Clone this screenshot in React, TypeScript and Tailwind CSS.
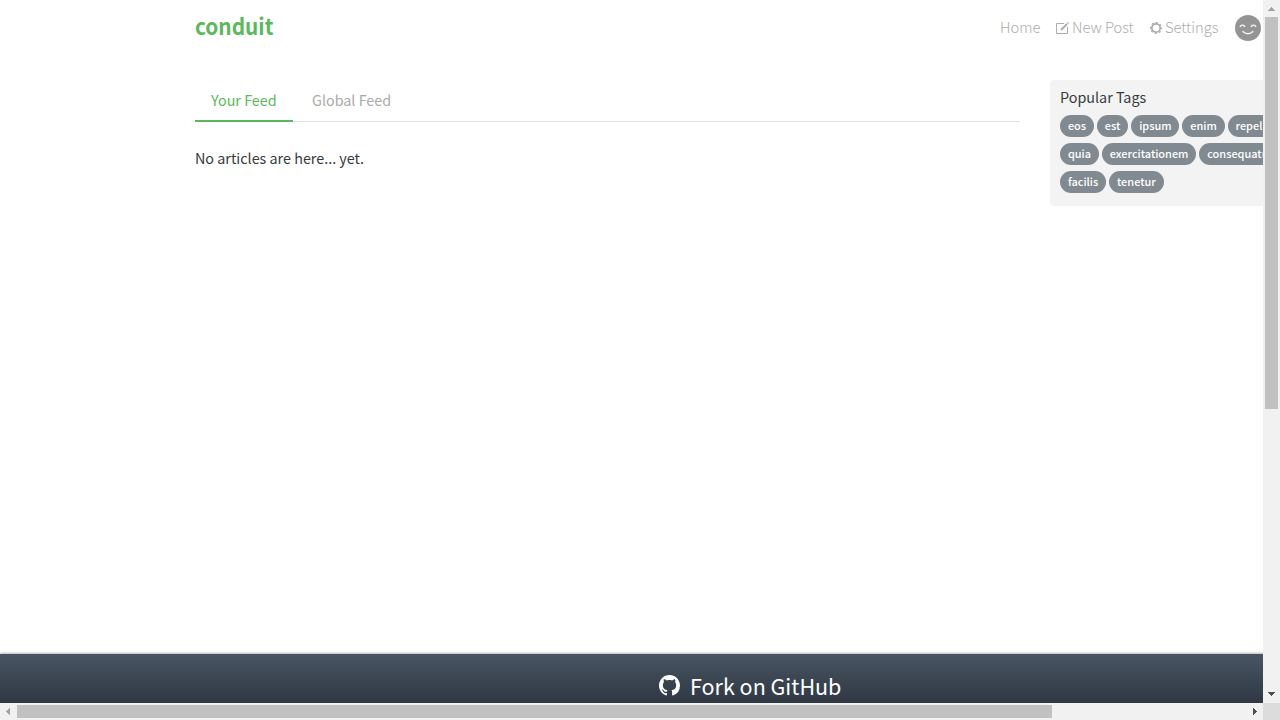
import type { ReactNode } from 'react';

function ComposeIcon() {
  return (
    <svg className="mr-[3px] h-[13px] w-[13px] shrink-0" viewBox="0 0 13 13" fill="none" stroke="currentColor">
      <path d="M8.2 1.5H.5v10h11V5" strokeWidth="1" />
      <path d="M5 8 11 2" strokeWidth="2" />
      <path d="M11.5 1.5 12.4.6" strokeWidth="1.6" />
    </svg>
  );
}

function GearIcon() {
  return (
    <svg className="mr-[3px] h-[13px] w-[13px] shrink-0" viewBox="0 0 13 13" fill="none" stroke="currentColor">
      <circle cx="7" cy="6" r="4.2" strokeWidth="1.7" />
      <circle cx="7" cy="6" r="5.4" strokeWidth="1.3" strokeDasharray="2.12 2.12" strokeDashoffset="1.06" />
    </svg>
  );
}

function GithubIcon() {
  return (
    <svg className="mt-[7px] mr-[10px] h-[21px] w-[21px] shrink-0" viewBox="0 0 16 16" fill="currentColor">
      <path d="M8 0C3.58 0 0 3.58 0 8c0 3.54 2.29 6.53 5.47 7.59.4.07.55-.17.55-.38 0-.19-.01-.82-.01-1.49-2.01.37-2.53-.49-2.69-.94-.09-.23-.48-.94-.82-1.13-.28-.15-.68-.52-.01-.53.63-.01 1.08.58 1.23.82.72 1.21 1.87.87 2.33.66.07-.52.28-.87.51-1.07-1.78-.2-3.64-.89-3.64-3.95 0-.87.31-1.59.82-2.15-.08-.2-.36-1.02.08-2.12 0 0 .67-.21 2.2.82.64-.18 1.32-.27 2-.27s1.36.09 2 .27c1.53-1.04 2.2-.82 2.2-.82.44 1.1.16 1.92.08 2.12.51.56.82 1.27.82 2.15 0 3.07-1.87 3.75-3.65 3.95.29.25.54.73.54 1.48 0 1.07-.01 1.93-.01 2.2 0 .21.15.46.55.38A8.01 8.01 0 0 0 16 8c0-4.42-3.58-8-8-8Z" />
    </svg>
  );
}

function Avatar() {
  return (
    <svg className="h-[26px] w-[26px] shrink-0" viewBox="0 0 26 26" fill="none">
      <circle cx="13" cy="13" r="13" fill="#949494" />
      <g stroke="#eeeeee" strokeWidth="1.5" strokeLinecap="round">
        <path d="M5.2 11.4c1-1.5 3.5-1.5 4.5 0M16.2 11.4c1-1.5 3.5-1.5 4.5 0" />
        <path d="M7.9 16.5c2.4 2.9 7.7 2.9 10 0" />
      </g>
    </svg>
  );
}

function Tag({ children }: { children: ReactNode }) {
  return (
    <span className="flex h-[22px] shrink-0 items-center rounded-full bg-[#818a91] px-[7.9px] pb-[2px] text-[10.95px] font-medium text-white">
      {children}
    </span>
  );
}

function Arrow({ d, color }: { d: string; color: string }) {
  return (
    <svg className="h-[17px] w-[17px] shrink-0" viewBox="0 0 17 17" shapeRendering="crispEdges">
      <path d={d} fill={color} />
    </svg>
  );
}

const tagRows = [
  ['eos', 'est', 'ipsum', 'enim', 'repellat'],
  ['quia', 'exercitationem', 'consequatur'],
  ['facilis', 'tenetur'],
];

export default function App() {
  return (
    <div className="grid h-[720px] w-[1280px] grid-cols-[1263px_17px] grid-rows-[703px_17px] overflow-hidden bg-white font-['Noto_Sans_CJK_JP','Noto_Sans_CJK_SC',sans-serif] text-[14.35px] leading-6 text-[#373a3c]">
      <div className="overflow-hidden">
        <div className="flex h-[703px] w-[1500px] flex-col">
          <nav className="flex h-14 shrink-0 items-center pl-[195px] text-[14.7px] font-light text-[#adadad]">
            <a className="w-[805px] origin-left scale-x-[0.945] pb-[6px] text-[22px] font-bold text-[#5cb85c]">conduit</a>
            <a className="w-14 pb-[2px]">Home</a>
            <a className="flex w-[93px] items-center"><ComposeIcon /><span className="pb-[2px]">New Post</span></a>
            <a className="flex w-[86px] items-center"><GearIcon /><span className="pb-[2px]">Settings</span></a>
            <Avatar />
          </nav>
          <main className="flex grow pt-6 pl-[195px]">
            <section className="w-[825px]">
              <div className="flex h-[42px] border-b border-[#e1e1e1]">
                <a className="h-[42px] w-[98px] border-b-2 border-[#5cb85c] pt-[8px] pl-4 text-[#5cb85c]">Your Feed</a>
                <a className="pt-[8px] pl-[19px] text-[#aaa]">Global Feed</a>
              </div>
              <p className="pt-[24px]">No articles are here... yet.</p>
            </section>
            <aside className="ml-[30px] h-[126px] w-[255px] rounded bg-[#f3f3f3] pt-[5px] pl-[10px]">
              <p>Popular Tags</p>
              <div className="flex flex-col gap-[6px] pt-[6px]">
                {tagRows.map((row) => (
                  <div key={row[0]} className="flex gap-[3px]">
                    {row.map((tag) => <Tag key={tag}>{tag}</Tag>)}
                  </div>
                ))}
              </div>
            </aside>
          </main>
          <footer className="flex h-[49px] shrink-0 items-start bg-linear-to-b from-[#485563] to-[#2f3843] pt-[14px] pl-[659px] text-[21.5px] leading-9 text-white shadow-[0_0_3px_rgba(0,0,0,0.5)]">
            <GithubIcon />
            Fork on GitHub
          </footer>
        </div>
      </div>
      <div className="flex flex-col items-center bg-[#f1f1f1]">
        <Arrow d="M8 7h1v1h1v1h1v1h1v1H5v-1h1V9h1V8h1z" color="#a3a3a3" />
        <div className="h-[392px] w-[13px] bg-[#c1c1c1]" />
        <div className="grow" />
        <Arrow d="M5 6h7v1h-1v1h-1v1H9v1H8V9H7V8H6V7H5z" color="#505050" />
      </div>
      <div className="flex items-center bg-[#f1f1f1]">
        <Arrow d="M10 5v7H9v-1H8v-1H7V9H6V8h1V7h1V6h1V5z" color="#a3a3a3" />
        <div className="h-[13px] w-[1035px] bg-[#c1c1c1]" />
        <div className="grow" />
        <Arrow d="M7 5v7h1v-1h1v-1h1V9h1V8h-1V7H9V6H8V5z" color="#505050" />
      </div>
      <div className="bg-[#dcdcdc]" />
    </div>
  );
}
